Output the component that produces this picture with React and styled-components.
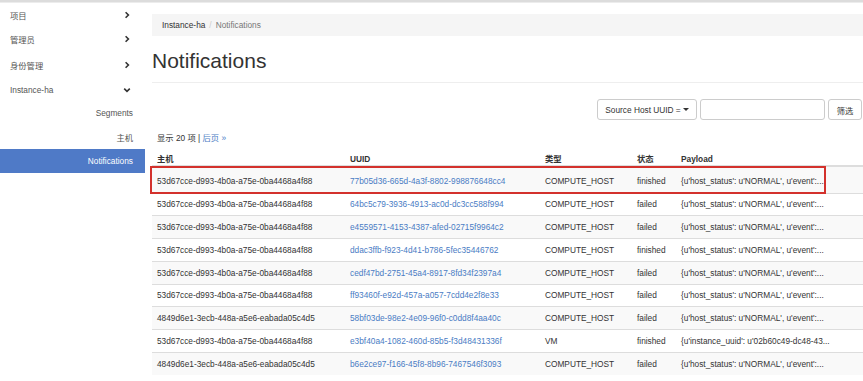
import styled, { createGlobalStyle } from "styled-components";

const GlobalStyle = createGlobalStyle`
  html, body {
    margin: 0;
    padding: 0;
    background: #fff;
  }
  body {
    font-family: "Liberation Sans", Arial, "Noto Sans CJK SC", sans-serif;
    font-size: 8.3px;
    color: #333;
  }
`;

const rows = [
    ["53d67cce-d993-4b0a-a75e-0ba4468a4f88", "77b05d36-665d-4a3f-8802-998876648cc4", "COMPUTE_HOST", "finished", "{u'host_status': u'NORMAL', u'event':..."],
    ["53d67cce-d993-4b0a-a75e-0ba4468a4f88", "64bc5c79-3936-4913-ac0d-dc3cc588f994", "COMPUTE_HOST", "failed", "{u'host_status': u'NORMAL', u'event':..."],
    ["53d67cce-d993-4b0a-a75e-0ba4468a4f88", "e4559571-4153-4387-afed-02715f9964c2", "COMPUTE_HOST", "failed", "{u'host_status': u'NORMAL', u'event':..."],
    ["53d67cce-d993-4b0a-a75e-0ba4468a4f88", "ddac3ffb-f923-4d41-b786-5fec35446762", "COMPUTE_HOST", "finished", "{u'host_status': u'NORMAL', u'event':..."],
    ["53d67cce-d993-4b0a-a75e-0ba4468a4f88", "cedf47bd-2751-45a4-8917-8fd34f2397a4", "COMPUTE_HOST", "failed", "{u'host_status': u'NORMAL', u'event':..."],
    ["53d67cce-d993-4b0a-a75e-0ba4468a4f88", "ff93460f-e92d-457a-a057-7cdd4e2f8e33", "COMPUTE_HOST", "failed", "{u'host_status': u'NORMAL', u'event':..."],
    ["4849d6e1-3ecb-448a-a5e6-eabada05c4d5", "58bf03de-98e2-4e09-96f0-c0dd8f4aa40c", "COMPUTE_HOST", "failed", "{u'host_status': u'NORMAL', u'event':..."],
    ["53d67cce-d993-4b0a-a75e-0ba4468a4f88", "e3bf40a4-1082-460d-85b5-f3d48431336f", "VM", "finished", "{u'instance_uuid': u'02b60c49-dc48-43..."],
    ["4849d6e1-3ecb-448a-a5e6-eabada05c4d5", "b6e2ce97-f166-45f8-8b96-7467546f3093", "COMPUTE_HOST", "failed", "{u'host_status': u'NORMAL', u'event':..."],
];

const navItems = [
    { label: "项目", icon: "right", height: 23 },
    { label: "管理员", icon: "right", height: 26 },
    { label: "身份管理", icon: "right", height: 26 },
    { label: "Instance-ha", icon: "down", height: 23 },
];

const subItems = ["Segments", "主机", "Notifications"];

function Chevron({ dir }) {
    return (
        <svg width="8" height="8" viewBox="0 0 8 8">
            {dir === "right"
                ? <path d="M2.6 1.2 L5.4 4 L2.6 6.8" fill="none" stroke="#333" strokeWidth="1.6" />
                : <path d="M1.2 2.6 L4 5.4 L6.8 2.6" fill="none" stroke="#333" strokeWidth="1.6" />}
        </svg>
    );
}

function App() {
    return (
        <>
            <GlobalStyle />
            <TopStrip />
            <Layout>
                <Sidebar>
                    {navItems.map((n) => (
                        <NavItem key={n.label} h={n.height}>
                            <span>{n.label}</span>
                            <Chevron dir={n.icon} />
                        </NavItem>
                    ))}
                    {subItems.map((s) => (
                        <SubItem key={s} active={s === "Notifications"}>{s}</SubItem>
                    ))}
                </Sidebar>
                <Main>
                    <Breadcrumb>
                        <span>Instance-ha</span>
                        <Sep>/</Sep>
                        <Current>Notifications</Current>
                    </Breadcrumb>
                    <PageHeader>
                        <h1>Notifications</h1>
                    </PageHeader>
                    <FilterRow>
                        <DropButton>Source Host UUID = <Caret /></DropButton>
                        <FilterInput type="text" />
                        <FilterButton>筛选</FilterButton>
                    </FilterRow>
                    <Pager>
                        显示 20 项 | <a>后页 &raquo;</a>
                    </Pager>
                    <TableWrap>
                        <Table>
                            <colgroup>
                                <col style={{ width: 193 }} />
                                <col style={{ width: 195 }} />
                                <col style={{ width: 92 }} />
                                <col style={{ width: 44 }} />
                                <col />
                            </colgroup>
                            <thead>
                                <tr>
                                    <th>主机</th>
                                    <th>UUID</th>
                                    <th>类型</th>
                                    <th>状态</th>
                                    <th>Payload</th>
                                </tr>
                            </thead>
                            <tbody>
                                {rows.map((r, i) => (
                                    <Row key={r[1]} first={i === 0} striped={i % 2 === 0}>
                                        <td>{r[0]}</td>
                                        <td><a>{r[1]}</a></td>
                                        <td>{r[2]}</td>
                                        <td>{r[3]}</td>
                                        <td>{r[4]}</td>
                                    </Row>
                                ))}
                            </tbody>
                        </Table>
                        <Highlight />
                    </TableWrap>
                </Main>
            </Layout>
        </>
    );
}

const TopStrip = styled.div`
    height: 2px;
    background: #dcdcdc;
    border-bottom: 1px solid #ececec;
`;

const Layout = styled.div`
    display: flex;
    align-items: flex-start;
`;

const Sidebar = styled.nav`
    width: 145px;
    flex-shrink: 0;
    display: flex;
    flex-direction: column;
`;

const NavItem = styled.div`
    height: ${(p) => p.h}px;
    display: flex;
    align-items: center;
    justify-content: space-between;
    padding: 0 14px 0 10px;
    color: #555;
    font-size: 8.3px;
`;

const SubItem = styled.div`
    height: 24px;
    display: flex;
    align-items: center;
    justify-content: flex-end;
    padding-right: 12px;
    font-size: 8.3px;
    color: ${(p) => (p.active ? "#fff" : "#555")};
    background: ${(p) => (p.active ? "#4f7ac7" : "transparent")};
`;

const Main = styled.main`
    flex: 1;
    padding-left: 7px;
    min-width: 0;
`;

const Breadcrumb = styled.div`
    margin-top: 11px;
    height: 22px;
    display: flex;
    align-items: center;
    padding-left: 10px;
    background: #f5f5f5;
    font-size: 8.3px;
    color: #333;
`;

const Sep = styled.span`
    color: #ccc;
    padding: 0 4px;
`;

const Current = styled.span`
    color: #777;
`;

const PageHeader = styled.div`
    border-bottom: 1px solid #eee;
    padding: 12px 0 8px;
    h1 {
        margin: 0;
        font-size: 21px;
        font-weight: 400;
        line-height: 26px;
        color: #333;
    }
`;

const FilterRow = styled.div`
    margin-top: 16px;
    display: flex;
    justify-content: flex-end;
    gap: 3px;
    padding-right: 1px;
`;

const DropButton = styled.button`
    width: 100px;
    height: 21px;
    border: 1px solid #ccc;
    border-radius: 3px;
    background: #fff;
    font-family: inherit;
    font-size: 8.3px;
    color: #333;
    padding: 0;
    display: flex;
    align-items: center;
    justify-content: center;
    gap: 2px;
`;

const Caret = styled.span`
    display: inline-block;
    width: 0;
    height: 0;
    border-left: 3px solid transparent;
    border-right: 3px solid transparent;
    border-top: 3px solid #333;
`;

const FilterInput = styled.input`
    width: 125px;
    height: 21px;
    box-sizing: border-box;
    border: 1px solid #ccc;
    border-radius: 3px;
    padding: 0 4px;
    font-size: 8.3px;
    outline: none;
`;

const FilterButton = styled.button`
    width: 34px;
    height: 21px;
    border: 1px solid #ccc;
    border-radius: 3px;
    background: #fff;
    font-family: inherit;
    font-size: 8.3px;
    color: #333;
    padding: 0;
`;

const Pager = styled.div`
    margin-top: 12px;
    padding-left: 5px;
    font-size: 8.3px;
    line-height: 12px;
    color: #333;
    a {
        color: #4a7cc4;
    }
`;

const TableWrap = styled.div`
    position: relative;
    margin-top: 9px;
`;

const Table = styled.table`
    width: 100%;
    border-collapse: collapse;
    table-layout: fixed;
    font-size: 8.3px;
    th {
        text-align: left;
        font-weight: 700;
        padding: 0 5px;
        line-height: 12px;
        border-bottom: 2px solid #ddd;
        color: #333;
    }
    td {
        padding: 0 5px;
        white-space: nowrap;
        overflow: hidden;
        color: #333;
    }
    td a {
        color: #4a7cc4;
    }
`;

const Row = styled.tr`
    height: ${(p) => (p.first ? "27px" : "22.75px")};
    background: ${(p) => (p.striped ? "#f9f9f9" : "#fff")};
    border-top: 1px solid #ddd;
    td {
        padding-top: ${(p) => (p.first ? "3px" : "0")};
    }
`;

const Highlight = styled.div`
    position: absolute;
    left: -2px;
    top: 13px;
    width: 676px;
    height: 28px;
    box-sizing: border-box;
    border: 2px solid #d3312c;
    pointer-events: none;
`;

export default App;
